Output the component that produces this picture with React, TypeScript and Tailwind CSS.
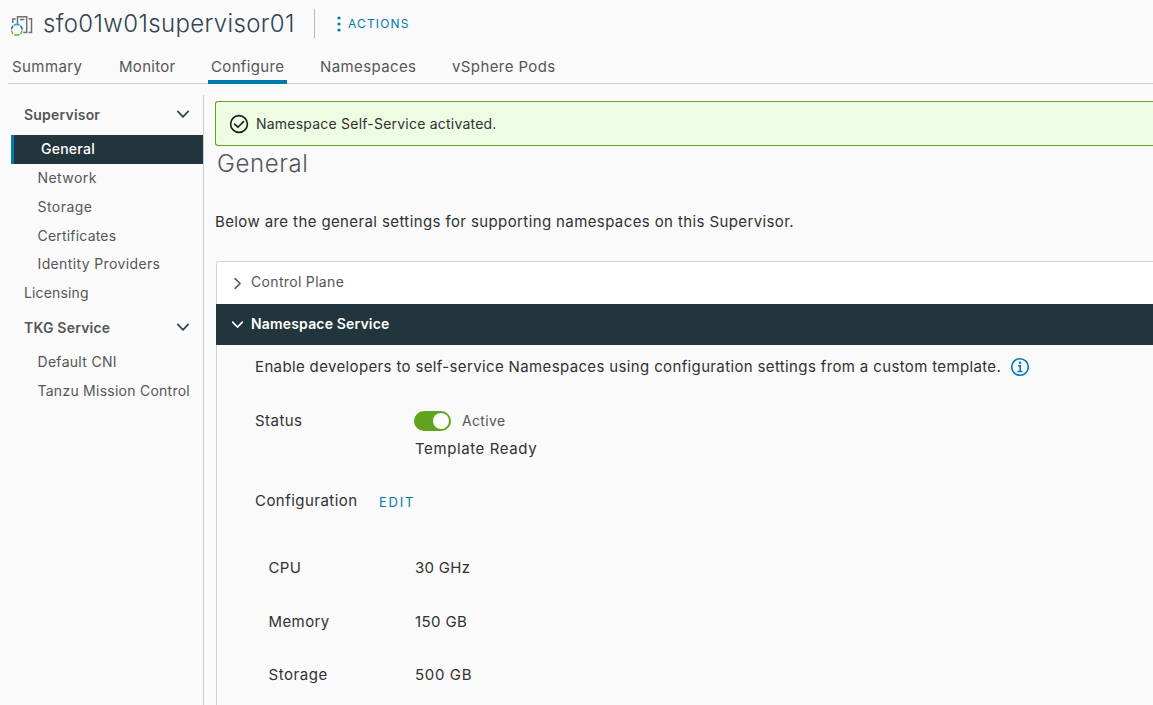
import React from "react";

type IconProps = { className?: string };

const Chevron = ({ className = "" }: IconProps) => (
  <svg className={className} viewBox="0 0 14 14" fill="none" stroke="currentColor" strokeWidth="1.7" strokeLinecap="round" strokeLinejoin="round">
    <path d="M1.8 4.4 7 9.8l5.2-5.4" />
  </svg>
);

const SupervisorIcon = () => (
  <svg className="h-6 w-6 shrink-0" viewBox="0 0 24 24" fill="none">
    <path d="M2.8 9V4.9h2.9M7.5 10V2.7h9.2v15.8h-3.4M10 5.4h4.4M18.6 4.7h2.9v13.8h-2.9" stroke="#707070" strokeWidth="1.5" />
    <circle cx="6.8" cy="15.8" r="6" fill="#fafafa" />
    <path d="M1.5 15.4a5.4 5.4 0 0 1 1.8-3.6M10.4 11.9a5.4 5.4 0 0 1 1.8 3.6" stroke="#3c5fa3" strokeWidth="1.5" />
    <path d="M3.9 11.3a5.4 5.4 0 0 1 5.8 0" stroke="#19b5cf" strokeWidth="1.5" />
    <path d="M12.1 16.5a5.4 5.4 0 0 1-1.7 3.3M9.5 20.5a5.4 5.4 0 0 1-5.2 0M3.2 19.8a5.4 5.4 0 0 1-1.7-3.3" stroke="#66b82c" strokeWidth="1.5" />
  </svg>
);

const tabs = [
  { label: "Summary", cls: "w-[107px] tracking-[0.42px]" },
  { label: "Monitor", cls: "w-[92px] tracking-[0.3px]" },
  { label: "Configure", cls: "w-[109px] tracking-[0.34px]" },
  { label: "Namespaces", cls: "w-[132px] tracking-[0.38px]" },
  { label: "vSphere Pods", cls: "w-[130px] tracking-[0.4px]" },
];

const supervisorItems = [
  { label: "Network", cls: "pb-[2px] tracking-[0.45px]" },
  { label: "Storage", cls: "pb-[2px] tracking-[0.45px]" },
  { label: "Certificates", cls: "pb-[3px] tracking-[0.2px]" },
  { label: "Identity Providers", cls: "pb-[4px] tracking-[0.37px]" },
];

const resources = [
  { label: "CPU", value: "30 GHz", labelCls: "tracking-[0.4px]", valueCls: "tracking-[0.3px]" },
  { label: "Memory", value: "150 GB", labelCls: "tracking-[0.4px]", valueCls: "tracking-[0.4px]" },
  { label: "Storage", value: "500 GB", labelCls: "tracking-[0.55px]", valueCls: "tracking-[0.65px]" },
];

export default function App() {
  return (
    <div className="flex h-[705px] w-full flex-col overflow-hidden bg-[#fafafa] font-['Inter',sans-serif] text-[14px] text-[#565656]">
      <header className="flex h-[50px] shrink-0 items-start pl-[10px]">
        <div className="pt-[14px]"><SupervisorIcon /></div>
        <h1 className="ml-[9px] w-[271px] whitespace-nowrap pt-[8px] text-[24px] font-light leading-8 tracking-[0.35px] text-[#314351]">sfo01w01supervisor01</h1>
        <div className="mt-[9px] h-[29px] w-px bg-[#b8b8b8]" />
        <button className="ml-[22px] mt-[14px] flex h-5 items-center text-[#0079ad]">
          <svg className="h-4 w-1" viewBox="0 0 4 16" fill="currentColor"><circle cx="2" cy="2" r="1.6" /><circle cx="2" cy="8" r="1.6" /><circle cx="2" cy="14" r="1.6" /></svg>
          <span className="ml-[7px] text-[12px] tracking-[1.15px]">ACTIONS</span>
        </button>
      </header>
      <nav className="ml-2 flex h-[34px] shrink-0 border-b border-[#ccd2d5] pl-1">
        {tabs.map((t) => (
          <div key={t.label} className={`relative whitespace-nowrap pt-[6px] text-[15px] leading-[21px] ${t.cls}`}>
            {t.label}
            {t.label === "Configure" && <div className="absolute -left-[3px] top-[30px] h-[4px] w-[79px] bg-[#0079ad]" />}
          </div>
        ))}
      </nav>
      <div className="flex min-h-0 flex-1">
        <aside className="mt-[11px] w-[204px] shrink-0 whitespace-nowrap border-r border-[#cccccc] pl-[11px]">
          <div className="flex h-[40px] items-center justify-between pb-[2px] pl-[13px] pr-[13px] font-semibold">
            <span className="tracking-[0.2px]">Supervisor</span><Chevron className="h-[14px] w-[14px] text-[#314351]" />
          </div>
          <div className="flex h-[29px] items-center border-l-[3px] border-[#0079ad] bg-[#22343c] pb-[2px] pl-[27px] font-medium tracking-[0.25px] text-white">General</div>
          {supervisorItems.map((i) => (
            <div key={i.label} className={`flex h-[29px] items-center pl-[26.5px] ${i.cls}`}>{i.label}</div>
          ))}
          <div className="flex h-[29px] items-center pb-[4px] pl-[13px] tracking-[0.15px]">Licensing</div>
          <div className="flex h-[39px] items-center justify-between pb-[3px] pl-[13px] pr-[13px] font-semibold">
            <span className="tracking-[0.2px]">TKG Service</span><Chevron className="h-[14px] w-[14px] text-[#314351]" />
          </div>
          <div className="flex h-[29px] items-center pb-[2px] pl-[26.5px] tracking-[0.3px]">Default CNI</div>
          <div className="flex h-[29px] items-center pb-[2px] pl-[26.5px] tracking-[0.25px]">Tanzu Mission Control</div>
        </aside>
        <main className="min-w-0 flex-1 whitespace-nowrap pl-[11px] pt-[17px] text-[#313131]">
          <div className="flex h-[45px] items-center rounded-l-[3px] border border-r-0 border-[#62a420] bg-[#eefce3] pl-[13px]">
            <svg className="h-[20px] w-[20px]" viewBox="0 0 20 20" fill="none" stroke="#1b1b1b" strokeWidth="1.6" strokeLinecap="round"><circle cx="10" cy="10" r="8.4" /><path d="m5.6 10.1 3.3 3.1 5.6-5.6" /></svg>
            <span className="ml-[7px] pb-px tracking-[0.22px]">Namespace Self-Service activated.</span>
          </div>
          <h2 className="h-[34px] pl-[2px] text-[24px] font-light leading-[35px] tracking-[0.6px] text-[#565656]">General</h2>
          <p className="mt-[31px] h-[22px] text-[15px] leading-[22px] tracking-[0.39px]">Below are the general settings for supporting namespaces on this Supervisor.</p>
          <section className="ml-px mt-[28px] h-[500px] rounded-tl-[3px] border-l border-t border-[#ccd3d8]">
            <div className="flex h-[42px] items-center rounded-tl-[2px] bg-white pl-[14px] text-[#565656]">
              <Chevron className="h-[13px] w-[13px] -rotate-90" /><span className="ml-[7px] pb-[3px] tracking-[0.33px]">Control Plane</span>
            </div>
            <div className="-ml-px flex h-[41px] items-center bg-[#22343c] pl-[15px] font-semibold text-white">
              <Chevron className="h-[13px] w-[13px]" /><span className="ml-[7px] pb-[2px] tracking-[0.17px]">Namespace Service</span>
            </div>
            <div className="pl-[38px] text-[15px]">
              <div className="flex h-[44px] items-center">
                <span className="tracking-[0.36px]">Enable developers to self-service Namespaces using configuration settings from a custom template.</span>
                <svg className="ml-[9px] h-5 w-5" viewBox="0 0 20 20" fill="none" stroke="#0079ad" strokeWidth="1.6"><circle cx="10" cy="10" r="8.3" /><path d="M8 8.7h2.2v5.6M7.5 14.5h5" /><circle cx="10" cy="5.8" r="1.2" fill="#0079ad" stroke="none" /></svg>
              </div>
              <div className="mt-[18px] flex h-[28px] items-center">
                <span className="w-[159px] pt-px tracking-[0.45px]">Status</span>
                <div className="flex h-[20px] w-[37px] items-center justify-end rounded-full bg-[#60a41e] pr-[2px]"><div className="h-4 w-4 rounded-full bg-white" /></div>
                <span className="ml-[11px] pb-[2px] text-[14px] tracking-[0.35px] text-[#565656]">Active</span>
              </div>
              <div className="h-[26px] pl-[160px] leading-[27px] tracking-[0.6px]">Template Ready</div>
              <div className="mt-[27px] flex h-[26px] items-center">
                <span className="w-[124px] pt-px tracking-[0.46px]">Configuration</span><button className="pt-[3px] text-[13px] tracking-[1.8px] text-[#0079ad]">EDIT</button>
              </div>
              <div className="mt-[28px] pl-[13.5px]">
                {resources.map((r) => (
                  <div key={r.label} className="flex h-[53.4px] items-center"><span className={`w-[146.5px] ${r.labelCls}`}>{r.label}</span><span className={r.valueCls}>{r.value}</span></div>
                ))}
              </div>
            </div>
          </section>
        </main>
      </div>
    </div>
  );
}
